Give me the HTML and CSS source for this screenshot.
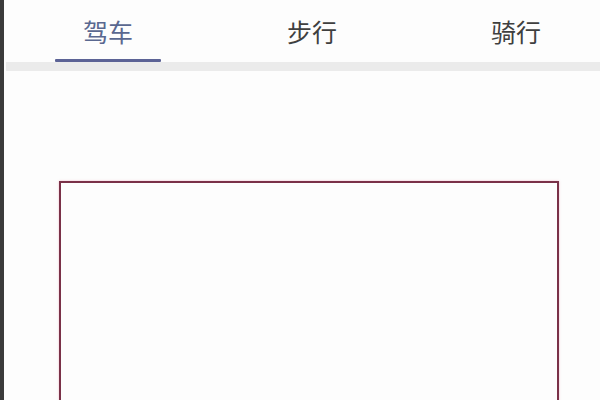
FILE: index.html
```html
<!DOCTYPE html>
<html lang="zh">
<head>
<meta charset="utf-8">
<link rel="stylesheet" href="styles.css">
</head>
<body>
<div class="page">
  <div class="edge"></div>
  <div class="main">
    <nav class="tabs">
      <div class="tab active"><span class="label">驾车</span><span class="bar"></span></div>
      <div class="tab"><span class="label">步行</span><span class="bar"></span></div>
      <div class="tab"><span class="label">骑行</span><span class="bar"></span></div>
    </nav>
    <div class="divider"></div>
    <div class="content">
      <div class="frame"></div>
    </div>
  </div>
</div>
</body>
</html>
```

FILE: styles.css
```css
html, body {
  margin: 0;
  padding: 0;
  width: 600px;
  height: 400px;
  overflow: hidden;
  background: #fdfdfd;
  font-family: "Noto Sans CJK SC", "Noto Sans", sans-serif;
}
.page {
  display: flex;
  height: 400px;
  overflow: hidden;
}
.edge {
  width: 4px;
  flex: none;
  background: #3b3b3b;
}
.main {
  flex: none;
  width: 612px;
  margin-left: 2px;
  display: flex;
  flex-direction: column;
  overflow: hidden;
}
.tabs {
  flex: none;
  display: grid;
  grid-template-columns: 204px 204px 204px;
  height: 62px;
}
.tab {
  display: flex;
  flex-direction: column;
  align-items: center;
  justify-content: flex-end;
}
.label {
  font-size: 25px;
  line-height: 30px;
  color: #3f3f3f;
  margin-bottom: 13px;
}
.bar {
  width: 106px;
  height: 3px;
  border-radius: 1px;
  background: transparent;
}
.tab.active .label {
  color: #5a6890;
}
.tab.active .bar {
  background: #5c6396;
}
.divider {
  flex: none;
  height: 9px;
  background: #ebebeb;
}
.content {
  flex: 1;
  min-height: 0;
  padding-top: 110px;
  padding-left: 53px;
}
.frame {
  width: 496px;
  height: 240px;
  border: 2px solid #7a3148;
  border-bottom: none;
  box-shadow: 0 0 2px rgba(230, 120, 150, 0.5);
}
```
